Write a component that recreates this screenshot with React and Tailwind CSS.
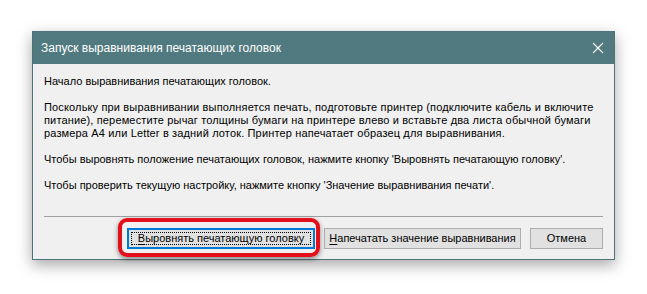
export default function App() {
  const font = { fontFamily: '"Liberation Sans", Arial, sans-serif' };
  return (
    <div className="w-[647px] h-[294px] bg-white pl-[32px] pt-[31px]" style={font}>
      <div className="w-[583px] h-[229px] flex flex-col border border-[#4d7479] bg-[#f0f0f0] shadow-[0_5px_14px_rgba(0,0,0,0.35)]">
        {/* Title bar */}
        <div className="h-[32px] shrink-0 flex items-center justify-between bg-[#517a80] pl-[8px] pr-[10px]">
          <span className="text-[12px] text-white leading-none whitespace-nowrap">Запуск выравнивания печатающих головок</span>
          <svg width="12" height="12" viewBox="0 0 12 12" className="text-white">
            <path d="M1 1 L11 11 M11 1 L1 11" stroke="currentColor" strokeWidth="1.1" />
          </svg>
        </div>

        {/* Body */}
        <div className="flex-1 flex flex-col px-[11px] pt-[11px] pb-[10px] text-[11px] leading-[13px] text-black whitespace-nowrap">
          <p className="mb-[13px]">Начало выравнивания печатающих головок.</p>
          <p className="mb-[13px] tracking-[0.15px]">
            Поскольку при выравнивании выполняется печать, подготовьте принтер (подключите кабель и включите
            <br />
            питание), переместите рычаг толщины бумаги на принтере влево и вставьте два листа обычной бумаги
            <br />
            размера A4 или Letter в задний лоток. Принтер напечатает образец для выравнивания.
          </p>
          <p className="mb-[13px]">Чтобы выровнять положение печатающих головок, нажмите кнопку 'Выровнять печатающую головку'.</p>
          <p>Чтобы проверить текущую настройку, нажмите кнопку 'Значение выравнивания печати'.</p>

          <div className="mt-auto border-t border-[#a0a0a0]" />

          <div className="relative mt-[11px] flex justify-end gap-[9px]">
            {/* red highlight */}
            <div className="absolute left-[74px] top-[-10px] w-[202px] h-[39px] rounded-[9px] border-[4px] border-[#e3101b] shadow-[0_2px_5px_rgba(0,0,0,0.45)] pointer-events-none" />
            <button className="relative h-[21px] w-[188px] border-2 border-[#0078d7] bg-[#e1e1e1] text-[11px] p-[2px]">
              <span className="flex h-full items-center justify-center border border-dotted border-black">
                <span className="underline underline-offset-2">В</span>ыровнять печатающую головку
              </span>
            </button>
            <button className="h-[21px] w-[197px] border border-[#adadad] bg-[#e1e1e1] text-[11px] whitespace-nowrap">
              <span className="underline underline-offset-2">Н</span>апечатать значение выравнивания
            </button>
            <button className="h-[21px] w-[73px] border border-[#adadad] bg-[#e1e1e1] text-[11px]">
              Отмена
            </button>
          </div>
        </div>
      </div>
    </div>
  );
}
